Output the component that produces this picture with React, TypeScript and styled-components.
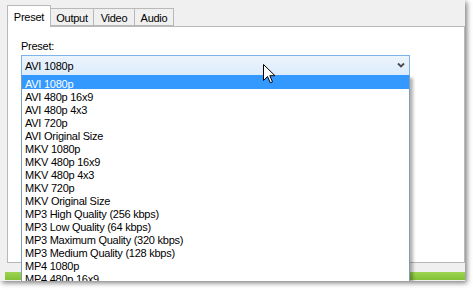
import { FC } from "react";
import styled, { createGlobalStyle } from "styled-components";

const presets = [
  "AVI 1080p",
  "AVI 480p 16x9",
  "AVI 480p 4x3",
  "AVI 720p",
  "AVI Original Size",
  "MKV 1080p",
  "MKV 480p 16x9",
  "MKV 480p 4x3",
  "MKV 720p",
  "MKV Original Size",
  "MP3 High Quality (256 kbps)",
  "MP3 Low Quality (64 kbps)",
  "MP3 Maximum Quality (320 kbps)",
  "MP3 Medium Quality (128 kbps)",
  "MP4 1080p",
  "MP4 480p 16x9",
];

const tabs = [
  { label: "Preset", width: 44 },
  { label: "Output", width: 44 },
  { label: "Video", width: 42 },
  { label: "Audio", width: 40 },
];

const GlobalStyle = createGlobalStyle`
  html, body {
    margin: 0;
    padding: 0;
    background: #fff;
  }
  body {
    font-family: "Liberation Sans", Arial, sans-serif;
    font-size: 11px;
    letter-spacing: -0.25px;
    color: #000;
  }
`;

const Screen = styled.div`
  position: relative;
  width: 473px;
  height: 290px;
  overflow: hidden;
  background: #fff;
`;

// the captured window clips the open list at its bottom edge
const Window = styled.div`
  width: 465px;
  height: 281px;
  background: #f0f0f0;
  box-shadow: 2px 2px 5px rgba(0, 0, 0, 0.5);
  display: flex;
  flex-direction: column;
  overflow: hidden;
`;

const TabControl = styled.div`
  padding: 5px 0 0 7px;
  display: flex;
  flex-direction: column;
`;

const TabStrip = styled.div`
  display: flex;
  align-items: flex-end;
  height: 21px;
`;

const Tab = styled.div<{ $active?: boolean; $w: number }>`
  box-sizing: border-box;
  width: ${(p) => p.$w}px;
  height: ${(p) => (p.$active ? 22 : 18)}px;
  margin-bottom: ${(p) => (p.$active ? -1 : 0)}px;
  margin-left: ${(p) => (p.$active ? 0 : -1)}px;
  padding-top: ${(p) => (p.$active ? 5 : 3)}px;
  line-height: 13px;
  text-align: center;
  border: 1px solid #b9b9b9;
  border-bottom: ${(p) => (p.$active ? "none" : "1px solid #b9b9b9")};
  background: ${(p) => (p.$active ? "#fff" : "#f0f0f0")};
  position: relative;
  z-index: ${(p) => (p.$active ? 1 : 0)};
  &:first-child {
    margin-left: 0;
  }
`;

const Panel = styled.div`
  box-sizing: border-box;
  height: 237px;
  background: #fff;
  border: 1px solid #b9b9b9;
  padding: 13px 0 0 13px;
`;

const FieldLabel = styled.div`
  line-height: 13px;
  margin-bottom: 2px;
`;

const Combo = styled.div`
  position: relative;
  box-sizing: border-box;
  width: 389px;
  height: 21px;
  border: 1px solid #7eb4ea;
  background: linear-gradient(#ecf4fc, #dcecfc);
  display: flex;
  align-items: center;
  justify-content: space-between;
  padding: 0 4px 0 3px;
`;

const Chevron = styled.svg`
  width: 8px;
  height: 6px;
  margin-top: -1px;
`;

const DropList = styled.div`
  position: absolute;
  top: 100%;
  left: -1px;
  width: 389px;
  box-sizing: border-box;
  background: #fff;
  border-left: 1px solid #7f9db9;
  border-right: 1px solid #7f9db9;
  box-shadow: 3px 3px 3px rgba(0, 0, 0, 0.3);
  z-index: 5;
`;

const Item = styled.div<{ $selected?: boolean }>`
  box-sizing: border-box;
  height: 13px;
  padding: 3px 0 0 3px;
  line-height: 10px;
  white-space: nowrap;
  background: ${(p) => (p.$selected ? "#3399ff" : "transparent")};
  color: ${(p) => (p.$selected ? "#fff" : "#000")};
  &:first-child {
    height: 14px;
    padding-top: 4px;
  }
`;

const StatusArea = styled.div`
  flex: 1;
  display: flex;
  flex-direction: column;
  justify-content: flex-end;
  padding: 0 0 1px 5px;
`;

const Progress = styled.div`
  height: 8px;
  background: linear-gradient(#9ed552, #82c136);
`;

const Cursor = styled.svg`
  position: absolute;
  left: 263px;
  top: 64px;
  width: 12px;
  height: 20px;
  z-index: 10;
`;

const App: FC = () => (
  <Screen>
    <GlobalStyle />
    <Window>
      <TabControl>
        <TabStrip>
          {tabs.map((t, i) => (
            <Tab key={t.label} $active={i === 0} $w={t.width}>
              {t.label}
            </Tab>
          ))}
        </TabStrip>
        <Panel>
          <FieldLabel>Preset:</FieldLabel>
          <Combo>
            <span>AVI 1080p</span>
            <Chevron viewBox="0 0 8 6">
              <path d="M1 1.5 L4 4.5 L7 1.5" fill="none" stroke="#4a4a4a" strokeWidth="1.8" />
            </Chevron>
            <DropList>
              {presets.map((p, i) => (
                <Item key={p} $selected={i === 0}>
                  {p}
                </Item>
              ))}
            </DropList>
          </Combo>
        </Panel>
      </TabControl>
      <StatusArea>
        <Progress />
      </StatusArea>
    </Window>
    <Cursor viewBox="0 0 12 20">
      <path
        d="M0.5 0.5 L0.5 16.5 L4.5 12.5 L7.3 18.8 L9.5 17.8 L6.8 11.7 L12 11.7 Z"
        fill="#fff"
        stroke="#000"
        strokeWidth="1"
        strokeLinejoin="miter"
      />
    </Cursor>
  </Screen>
);

export default App;
